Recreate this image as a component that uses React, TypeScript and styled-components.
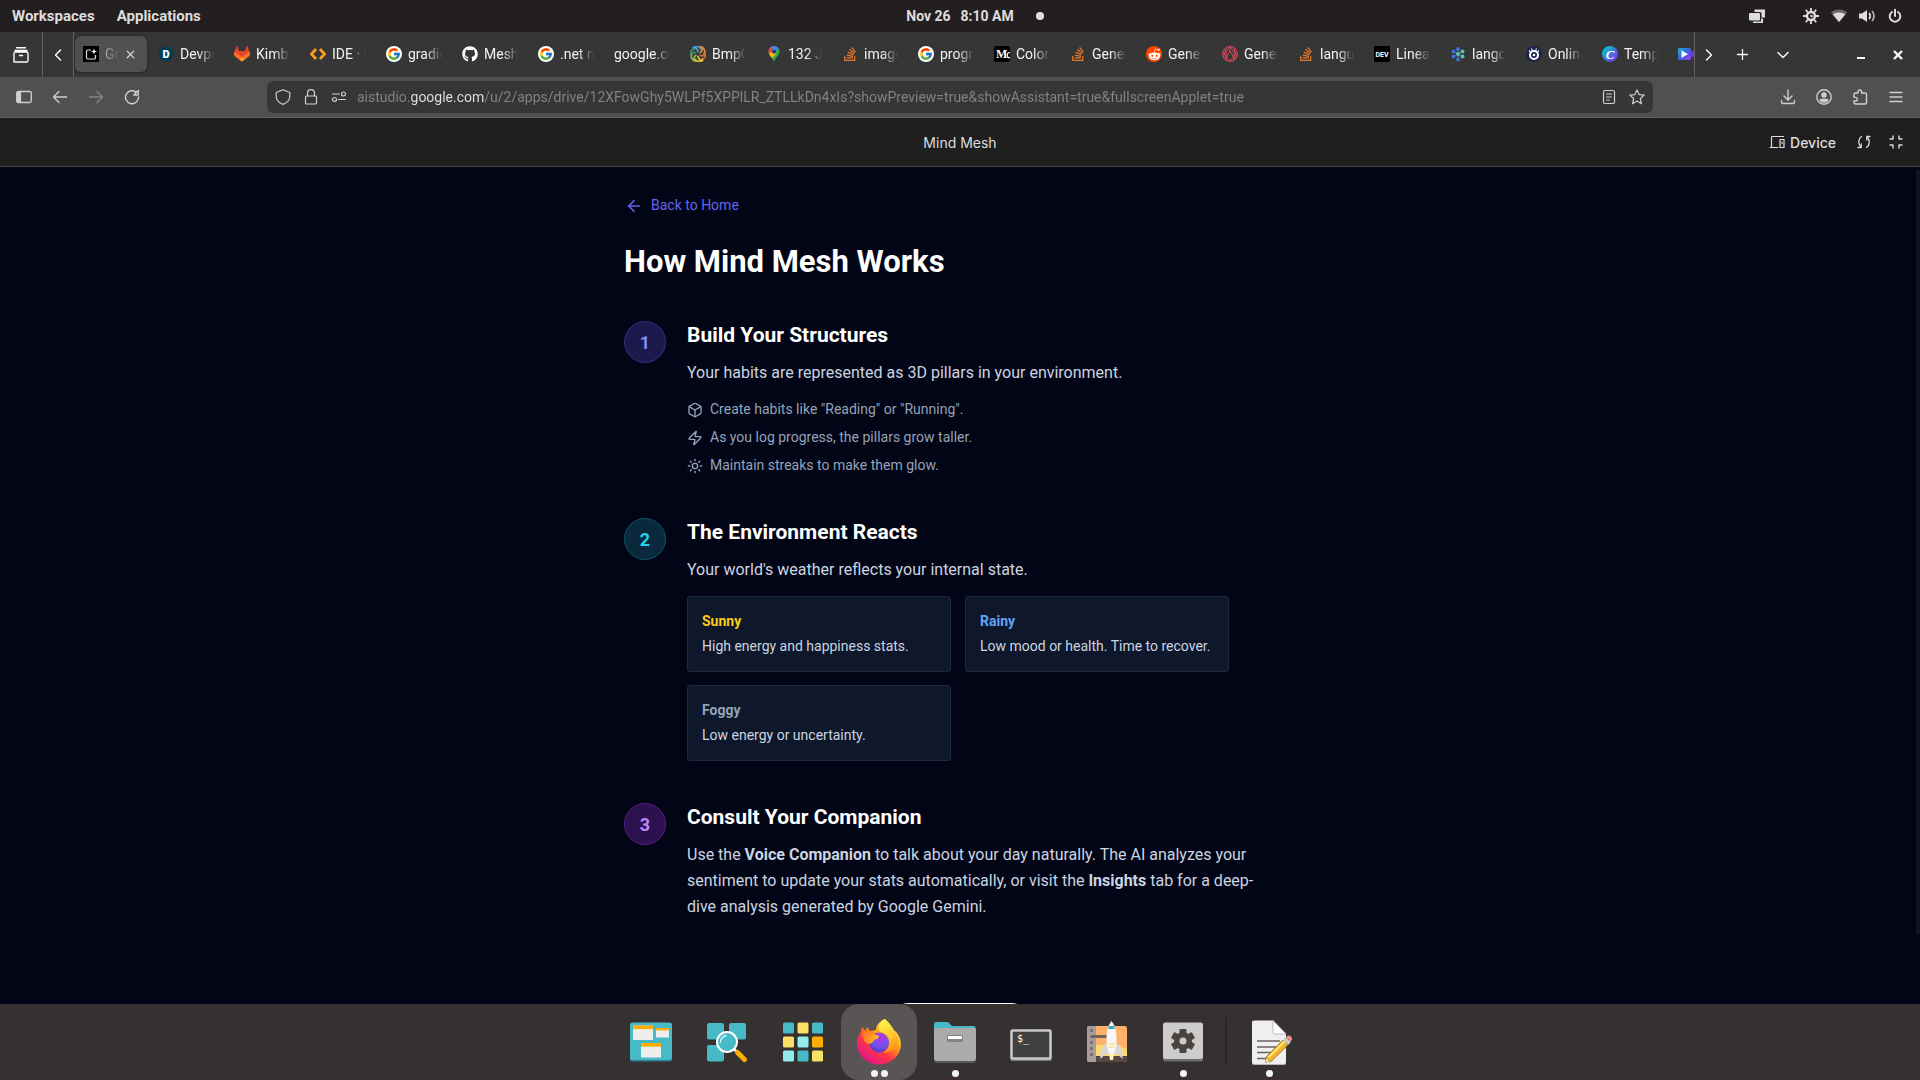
import React from 'react';
import styled, { createGlobalStyle } from 'styled-components';
import { ArrowLeft, Box, ChevronDown, ChevronLeft, ChevronRight, Plus, Sun, X, Zap } from 'lucide-react';
import { FcGoogle } from 'react-icons/fc';
import { FaGithub, FaStackOverflow, FaRedditAlien } from 'react-icons/fa';

const GlobalStyle = createGlobalStyle`
  *, *::before, *::after { box-sizing: border-box; }
  body {
    margin: 0;
    background: #020515;
    font-family: Roboto, "Liberation Sans", sans-serif;
  }
  button { font: inherit; color: inherit; background: none; border: 0; padding: 0; cursor: pointer; }
  svg { display: block; flex: none; }
  h1, h2, h3, p, ul, ol { margin: 0; padding: 0; }
  ul, ol { list-style: none; }
`;

const Screen = styled.div`
  display: flex;
  flex-direction: column;
  height: 100vh;
  overflow: hidden;
`;

/* ---------- desktop panel ---------- */

const Panel = styled.header`
  display: grid;
  grid-template-columns: 1fr auto 1fr;
  align-items: center;
  flex: none;
  height: 32px;
  padding: 0 17px 0 12px;
  background: #231f20;
  color: #dedddd;
  font-size: 15px;
  font-weight: 700;
`;

const PanelMenu = styled.nav`
  display: flex;
  gap: 22px;
`;

const Clock = styled.button`
  display: flex;
  gap: 10px;
  margin-left: 5px;
  font-size: 14px;
`;

const PanelEnd = styled.div`
  display: flex;
  align-items: center;
  gap: 12px;
`;

const NoticeDot = styled.span`
  width: 8px;
  height: 8px;
  margin: 0 auto 0 22px;
  border-radius: 50%;
  background: #dedddd;
`;

const TrayGap = styled.span`
  width: 14px;
`;

/* ---------- browser chrome ---------- */

const TabStrip = styled.div`
  display: flex;
  align-items: stretch;
  flex: none;
  height: 45px;
  background: #363636;
  color: #fbfbfe;
`;

const StripButton = styled.button<{ $w: number; $line?: 'left' | 'right' }>`
  display: flex;
  align-items: center;
  justify-content: center;
  flex: none;
  width: ${p => p.$w}px;
  ${p => p.$line && `border-${p.$line}: 1px solid #626262;`}
`;

const Tabs = styled.div`
  display: flex;
  flex: 1;
  min-width: 0;
  overflow: hidden;
  padding: 4px 0;
`;

const Tab = styled.div<{ $active?: boolean }>`
  display: flex;
  align-items: center;
  flex: none;
  width: ${p => (p.$active ? 72 : 76)}px;
  height: 36px;
  margin: 0 ${p => (p.$active ? 3 : 0)}px 0 ${p => (p.$active ? 1 : 0)}px;
  padding: 0 ${p => (p.$active ? 10 : 8)}px 0 8px;
  border-radius: 6px;
  font-size: 14px;
  background: ${p => (p.$active ? '#505050' : 'transparent')};
  box-shadow: ${p => (p.$active ? '0 0 3px rgba(0, 0, 0, 0.5)' : 'none')};
`;

const TabButton = styled.button<{ $dim?: boolean }>`
  display: flex;
  align-items: center;
  gap: 6px;
  flex: 1;
  min-width: 0;
  color: ${p => (p.$dim ? '#b4b4b6' : '#f2f2f4')};
`;

const TabTitle = styled.span`
  flex: 1;
  min-width: 0;
  overflow: hidden;
  white-space: nowrap;
  text-align: left;
  line-height: 20px;
  mask-image: linear-gradient(to left, transparent 4px, #000 20px);
`;

const StripEnd = styled.div`
  display: flex;
  width: 226px;
  flex: none;
`;

const WindowButtons = styled.div`
  display: flex;
  margin: 0 4px 0 auto;
`;

const NavBar = styled.div`
  display: flex;
  align-items: center;
  flex: none;
  height: 41px;
  padding: 0 6px;
  background: #505050;
  border-bottom: 1px solid #5f5f5f;
  color: #cfcfd2;
`;

const NavButton = styled.button<{ $dim?: boolean; $w?: number }>`
  display: flex;
  align-items: center;
  justify-content: center;
  flex: none;
  width: ${p => p.$w ?? 36}px;
  height: 32px;
  opacity: ${p => (p.$dim ? 0.4 : 1)};
`;

const AddressBar = styled.form`
  display: flex;
  align-items: center;
  flex: 1;
  min-width: 0;
  height: 32px;
  margin: 0 117px;
  padding: 0 2px;
  border-radius: 6px;
  background: #363636;
`;

const AddressInput = styled.input`
  flex: 1;
  min-width: 0;
  height: 24px;
  padding: 0 0 0 4px;
  border: 0;
  outline: 0;
  font: 14px Roboto, "Liberation Sans", sans-serif;
  color: transparent;
  background: linear-gradient(to right, #848486 58px, #e4e4e6 58px, #e4e4e6 131px, #848486 131px);
  background-clip: text;
  -webkit-background-clip: text;
`;

/* ---------- applet toolbar ---------- */

const AppBar = styled.div`
  display: grid;
  grid-template-columns: 1fr auto 1fr;
  align-items: center;
  flex: none;
  height: 49px;
  padding: 0 16px;
  background: #1f1f1f;
  border-bottom: 1px solid #444444;
  color: #dcdcdc;
  font-family: Inter, "Liberation Sans", sans-serif;
  font-size: 14px;
`;

const AppName = styled.span`
  grid-column: 2;
`;

const AppActions = styled.div`
  display: flex;
  align-items: center;
  justify-content: flex-end;
  gap: 16px;
`;

const IconLabel = styled.button`
  display: flex;
  align-items: center;
  gap: 5px;
  margin-right: 4px;
  font-weight: 500;
`;

/* ---------- page ---------- */

const Page = styled.main`
  position: relative;
  flex: 1;
  min-height: 0;
  overflow: hidden;
  background: #020515;
`;

const ScrollThumb = styled.span`
  position: absolute;
  top: 2px;
  right: 0;
  width: 4px;
  height: 766px;
  border-radius: 2px;
  background: #0d1322;
`;

const Content = styled.div`
  display: flex;
  flex-direction: column;
  max-width: 672px;
  margin: 0 auto;
  padding: 28px 0;
`;

const BackLink = styled.a`
  display: flex;
  align-items: center;
  align-self: flex-start;
  gap: 8px;
  padding-left: 1px;
  color: #6366f1;
  font-size: 14px;
  line-height: 21px;
  text-decoration: none;
`;

const Title = styled.h1`
  margin: 28px 0 42px;
  color: #ffffff;
  font-size: 31px;
  line-height: 35px;
`;

const Steps = styled.ol`
  display: flex;
  flex-direction: column;
  gap: 42px;
`;

const Step = styled.li`
  display: flex;
  align-items: flex-start;
  gap: 21px;
`;

const StepBody = styled.div`
  display: flex;
  flex-direction: column;
  min-width: 0;
`;

const tones = {
  indigo: { text: '#818cf8', fill: '#1c1a4c', line: '#312e81' },
  cyan: { text: '#22d3ee', fill: '#0a293d', line: '#0e5263' },
  purple: { text: '#c084fc', fill: '#2d114f', line: '#581c87' },
};

const StepNumber = styled.span<{ $tone: keyof typeof tones }>`
  display: flex;
  align-items: center;
  justify-content: center;
  flex: none;
  width: 42px;
  height: 42px;
  border: 1px solid ${p => tones[p.$tone].line};
  border-radius: 50%;
  background: ${p => tones[p.$tone].fill};
  color: ${p => tones[p.$tone].text};
  font-size: 18px;
  font-weight: 700;
`;

const StepTitle = styled.h2`
  color: #ffffff;
  font-size: 21px;
  line-height: 28px;
`;

const StepText = styled.p`
  max-width: 588px;
  margin-top: 11px;
  color: #cbd5e1;
  font-size: 16px;
  line-height: 26px;
`;

const Hints = styled.ul`
  display: flex;
  flex-direction: column;
  gap: 7px;
  margin-top: 13px;
`;

const Hint = styled.li`
  display: flex;
  align-items: center;
  gap: 7px;
  color: #94a3b8;
  font-size: 14px;
  line-height: 21px;
`;

const WeatherGrid = styled.div`
  display: grid;
  grid-template-columns: repeat(2, minmax(0, 264px));
  gap: 13px 14px;
  margin-top: 13px;
`;

const WeatherCard = styled.section`
  padding: 12px 14px;
  border: 1px solid #1e293b;
  border-radius: 3px;
  background: #0f172a;
  color: #cbd5e1;
  font-size: 14px;
  line-height: 25px;
`;

const WeatherName = styled.h3<{ $color: string }>`
  color: ${p => p.$color};
  font-size: 14px;
  line-height: 25px;
`;

const StartButton = styled.button`
  align-self: center;
  width: 144px;
  height: 42px;
  margin-top: 83px;
  border-radius: 21px;
  background: #ffffff;
`;

/* ---------- dock ---------- */

const Dock = styled.footer`
  display: flex;
  justify-content: center;
  flex: none;
  height: 76px;
  background: #353130;
  border-bottom: 1px solid #3d2c30;
`;

const DockItem = styled.button<{ $active?: boolean }>`
  display: flex;
  flex-direction: column;
  align-items: center;
  gap: 4px;
  width: 76px;
  height: 76px;
  padding-top: 14px;
  border-radius: 18px;
  background: ${p => (p.$active ? '#585554' : 'transparent')};
`;

const DockDots = styled.span`
  display: flex;
  gap: 3px;
`;

const DockDot = styled.span`
  width: 7px;
  height: 7px;
  border-radius: 50%;
  background: #f4f4f4;
`;

const DockLine = styled.span`
  width: 2px;
  height: 48px;
  margin: 14px 4px;
  background: #2a2625;
`;

/* ---------- favicons ---------- */

const Fav = ({ children, box = 16 }: { children: React.ReactNode; box?: number }) => (
  <svg width="16" height="16" viewBox={`0 0 ${box} ${box}`} aria-hidden="true">{children}</svg>
);

const RoundBack = styled.span<{ $color: string }>`
  display: flex;
  align-items: center;
  justify-content: center;
  flex: none;
  width: 16px;
  height: 16px;
  border-radius: 50%;
  background: ${p => p.$color};
`;

const Google = () => <RoundBack $color="#fff"><FcGoogle size={14} /></RoundBack>;
const Stack = () => <FaStackOverflow size={16} color="#e8762d" />;

const Studio = () => (
  <Fav>
    <rect width="16" height="16" fill="#000" />
    <path d="M8 4H5a1.5 1.5 0 0 0-1.5 1.5v6A1.5 1.5 0 0 0 5 13h6a1.5 1.5 0 0 0 1.500-1.500V9" fill="none" stroke="#ddd" strokeWidth="1.200" />
    <path d="M11 2.500l.8 2.200 2.200.8-2.200.8-.8 2.200-.8-2.200L8 5.500l2.200-.8z" fill="#fff" />
  </Fav>
);

const Devpost = () => (
  <Fav>
    <path d="M4 1h8l4 7-4 7H4L0 8z" fill="#003e54" />
    <text x="8" y="12" textAnchor="middle" fill="#fff" fontFamily="Roboto, sans-serif" fontSize="11" fontWeight="900">D</text>
  </Fav>
);

const Gitlab = () => (
  <Fav box={25}>
    <path fill="#E24329" d="M24.507 9.500l-.034-.09L21.082.562a.896.896 0 00-1.694.091l-2.290 7.010H7.825L5.535.653a.898.898 0 00-1.694-.09L.451 9.411.416 9.500a6.297 6.297 0 002.090 7.278l.012.010.030.022 5.160 3.867 2.560 1.935 1.554 1.176a1.051 1.051 0 001.268 0l1.555-1.176 2.560-1.935 5.197-3.890.014-.010A6.297 6.297 0 0024.507 9.500z" />
    <path fill="#FC6D26" d="M24.507 9.500l-.034-.09a11.440 11.440 0 00-4.560 2.051l-7.447 5.632 4.742 3.584 5.197-3.890.014-.010A6.297 6.297 0 0024.507 9.500z" />
    <path fill="#FCA326" d="M7.707 20.677l2.560 1.935 1.555 1.176a1.051 1.051 0 001.268 0l1.555-1.176 2.560-1.935-4.743-3.584-4.755 3.584z" />
    <path fill="#FC6D26" d="M5.010 11.461a11.430 11.430 0 00-4.560-2.050L.416 9.500a6.297 6.297 0 002.090 7.278l.012.010.030.022 5.160 3.867 4.745-3.584-7.444-5.632z" />
  </Fav>
);

const Ide = () => (
  <Fav>
    <path d="M6 3L1.500 8 6 13M10 3l4.500 5L10 13" fill="none" stroke="#f79a2b" strokeWidth="2.800" />
  </Fav>
);

/* six curved blades turning round the centre */
const Swirl = () => (
  <Fav>
    {['#4aa3d8', '#e88b3c', '#d8693a', '#e6c23f', '#8fbf45', '#3f8f6b'].map((c, i) => (
      <path key={c} d="M8 6.200C8 3 5.500 .8 2.800 2.200 4.500 0 9.500-.8 11 3.200" fill="none" stroke={c} strokeWidth="1.700" transform={`rotate(${i * 60} 8 8)`} />
    ))}
  </Fav>
);

const MapPin = () => (
  <Fav>
    <defs>
      <clipPath id="pin"><path d="M8 0a5.600 5.600 0 0 1 5.600 5.600C13.600 9.500 9.500 11 8 16 6.500 11 2.400 9.500 2.400 5.600A5.600 5.600 0 0 1 8 0z" /></clipPath>
    </defs>
    <g clipPath="url(#pin)">
      <rect width="16" height="16" fill="#34a853" />
      <path d="M0 0h16L8 6z" fill="#4285f4" />
      <path d="M0 0h4l4 6-6 3z" fill="#ea4335" />
      <path d="M2 9l6-6 2 5-5 5z" fill="#fbbc04" />
    </g>
    <circle cx="8" cy="5.600" r="2.100" fill="#1d3c78" />
  </Fav>
);

const Medium = () => (
  <Fav>
    <rect width="16" height="16" rx="2.500" fill="#000" />
    <text x="2" y="12" fill="#fff" fontFamily="Liberation Serif, serif" fontSize="12" fontWeight="700">M</text>
    <path d="M16 6.500c-2 0-2.800 1.200-2.800 2.800s.8 2.600 2.800 2.600" fill="none" stroke="#fff" strokeWidth="1.200" />
  </Fav>
);

const Reddit = () => <RoundBack $color="#ff4500"><FaRedditAlien size={13} color="#fff" /></RoundBack>;

const Geo = () => (
  <Fav>
    <g fill="none" stroke="#dd4a5c" strokeWidth="1">
      <circle cx="8" cy="8" r="7.400" />
      <path d="M8 .7C3.500 5 2.500 11 5 14.500M8 .7c4.500 4.300 5.500 10.300 3 13.800M8 1v4M8 5L4.500 11 8 15l3.500-4zM1 6l4 5M15 6l-4 5M4 2L1.500 11 5 14.500M12 2l2.500 9-3.500 3.500" />
    </g>
  </Fav>
);

const Dev = () => (
  <Fav>
    <rect width="16" height="16" rx="1" fill="#000" />
    <text x="8" y="11" textAnchor="middle" fill="#fff" fontFamily="Roboto, sans-serif" fontSize="7" fontWeight="700">DEV</text>
  </Fav>
);

const Chain = () => (
  <Fav>
    <g stroke="#3f7fd0" strokeWidth="1"><path d="M8 8V3M8 8v5M8 8L3.500 5.500M8 8l4.500-2.500M8 8l-4.500 2.500M8 8l4.500 2.500" /></g>
    <g fill="#3f6fd0"><circle cx="8" cy="3" r="2" /><circle cx="3.500" cy="5.500" r="2" /><circle cx="3.500" cy="10.500" r="2" /><circle cx="8" cy="13.500" r="2" /></g>
    <g fill="#5cc5a0"><circle cx="12.500" cy="5.500" r="2" /><circle cx="12.500" cy="10.500" r="2" /><circle cx="8" cy="8" r="2" /></g>
  </Fav>
);

const Eye = () => (
  <Fav>
    <circle cx="8" cy="8" r="8" fill="#1d2350" />
    <circle cx="8" cy="9" r="4" fill="none" stroke="#fff" strokeWidth="2" />
    <circle cx="8" cy="9" r="1.300" fill="#fff" />
    <path d="M3 4.500l1.500 1.500M5.500 2.500l.7 1.700M10.500 2.500l-.7 1.700M13 4.500L11.500 6" stroke="#fff" strokeWidth="1.100" />
  </Fav>
);

const Canva = () => (
  <Fav>
    <defs><linearGradient id="canva" x1="0" y1="0" x2="1" y2="1"><stop offset="0.100" stopColor="#00c9cf" /><stop offset="0.900" stopColor="#7d2ae8" /></linearGradient></defs>
    <circle cx="8" cy="8" r="8" fill="url(#canva)" />
    <text x="8" y="12.500" textAnchor="middle" fill="#fff" fontFamily="Liberation Serif, serif" fontSize="13" fontStyle="italic" fontWeight="700">C</text>
  </Fav>
);

const Clip = () => (
  <Fav>
    <defs><linearGradient id="clip" x1="0" y1="0" x2="1" y2="1"><stop offset="0" stopColor="#1fb6d6" /><stop offset="0.500" stopColor="#3a62e0" /><stop offset="1" stopColor="#9a3af0" /></linearGradient></defs>
    <rect y="2" width="13" height="12" rx="1.500" fill="url(#clip)" />
    <path d="M12 7l4-3v8l-4-3z" fill="#6c3ae6" />
    <path d="M3.500 4.500l6.500 3.500-6.500 4z" fill="#fff" />
  </Fav>
);

const tabs: { title: string; icon?: React.ReactNode }[] = [
  { title: 'Devpo', icon: <Devpost /> },
  { title: 'Kimbe', icon: <Gitlab /> },
  { title: 'IDE · I', icon: <Ide /> },
  { title: 'gradie', icon: <Google /> },
  { title: 'Mesh', icon: <FaGithub size={16} color="#fff" /> },
  { title: '.net m', icon: <Google /> },
  { title: 'google.co' },
  { title: 'BmpC', icon: <Swirl /> },
  { title: '132 Ja', icon: <MapPin /> },
  { title: 'image', icon: <Stack /> },
  { title: 'progr', icon: <Google /> },
  { title: 'Color', icon: <Medium /> },
  { title: 'Gener', icon: <Stack /> },
  { title: 'Gener', icon: <Reddit /> },
  { title: 'Gener', icon: <Geo /> },
  { title: 'langu', icon: <Stack /> },
  { title: 'Linea', icon: <Dev /> },
  { title: 'langc', icon: <Chain /> },
  { title: 'Onlin', icon: <Eye /> },
  { title: 'Temp', icon: <Canva /> },
  { title: '', icon: <Clip /> },
];

/* ---------- line icons ---------- */

const Line = ({ children, w = 1.2 }: { children: React.ReactNode; w?: number }) => (
  <svg width="16" height="16" viewBox="0 0 16 16" fill="none" stroke="currentColor" strokeWidth={w} strokeLinecap="round" strokeLinejoin="round" aria-hidden="true">{children}</svg>
);

/* ---------- dock icons ---------- */

const Art = ({ children }: { children: React.ReactNode }) => (
  <svg width="48" height="48" viewBox="0 0 48 48" aria-hidden="true">{children}</svg>
);

const WorkspacesArt = () => (
  <Art>
    <rect x="3" y="5" width="42" height="38.500" rx="2.500" fill="#2b8490" />
    <rect x="3" y="4.500" width="42" height="37.500" rx="2.500" fill="#48b9c7" />
    {[[6, 7.5, 20, 14.5], [29, 10, 13, 9.5], [14, 25, 20, 14.5]].map(([x, y, w, h]) => (
      <g key={x}>
        <rect x={x} y={y} width={w} height={h} fill="#eeeeee" />
        <rect x={x} y={y} width={w} height={h / 4} fill="#ffad00" />
      </g>
    ))}
  </Art>
);

const SearchArt = () => (
  <Art>
    {[[4, 5], [26, 5], [4, 27]].map(([x, y]) => (
      <rect key={`${x}-${y}`} x={x} y={y} width="17" height="16.500" rx="2" fill="#48b9c7" />
    ))}
    <path d="M31 31l3 3" stroke="#fff" strokeWidth="2.500" />
    <path d="M34.500 34.500l7 7" stroke="#ffad00" strokeWidth="5" strokeLinecap="round" />
    <circle cx="24" cy="24" r="10" fill="#48b9c7" stroke="#fff" strokeWidth="2" />
    <path d="M17.500 25a6.700 6.700 0 0 1 6-7.500" fill="none" stroke="#d8f4f7" strokeWidth="1.300" />
  </Art>
);

const GridArt = () => {
  const fills = ['#48b9c7', '#fae065', '#48b9c7', '#fae065', '#94ebeb', '#ffad00', '#94ebeb', '#48b9c7', '#fae065'];
  return (
    <Art>
      {fills.map((f, i) => (
        <rect key={i} x={4 + (i % 3) * 14.5} y={4.5 + Math.floor(i / 3) * 14} width="11" height="11" rx="1.500" fill={f} />
      ))}
    </Art>
  );
};

const FirefoxArt = () => (
  <Art>
    <defs>
      <linearGradient id="ffBody" x1="0.850" y1="0.100" x2="0.250" y2="0.950">
        <stop offset="0.050" stopColor="#fff44f" /><stop offset="0.400" stopColor="#ff980e" /><stop offset="0.650" stopColor="#ff3647" /><stop offset="1" stopColor="#e31587" />
      </linearGradient>
      <radialGradient id="ffGlobe" cx="0.600" cy="0.250" r="0.900">
        <stop offset="0" stopColor="#b833e1" /><stop offset="0.500" stopColor="#7153eb" /><stop offset="1" stopColor="#4a2fb0" />
      </radialGradient>
      <linearGradient id="ffFlame" x1="0.300" y1="0" x2="0.700" y2="1"><stop offset="0" stopColor="#fff44f" /><stop offset="0.550" stopColor="#ffc62e" /><stop offset="1" stopColor="#ff8a16" /></linearGradient>
      <linearGradient id="ffHead" x1="0" y1="0" x2="1" y2="0.300"><stop offset="0" stopColor="#ff6a1f" /><stop offset="1" stopColor="#ffb52c" /></linearGradient>
    </defs>
    <path d="M30 1c5 4 7 8 9.500 12 1 0 2 1.500 2 1.500 2.500 3 4.500 7 4.500 12A22 20.500 0 0 1 24 46.500 22 20.500 0 0 1 2 26c0-5 1.500-9 4-12l1-5 3.500 4L12 9l3 4 6-1c0-5 4-9 9-11z" fill="url(#ffBody)" />
    <circle cx="24" cy="24.500" r="10" fill="url(#ffGlobe)" />
    <path d="M30 1c-6 5-8 9-4.500 12.500C31 15 35 19 34.500 25c0 5-3 8-6 9.500 8 0 14-5 14.500-13-1-8-8-13-13-20.500z" fill="url(#ffFlame)" />
    <path d="M7 14l4-1 4 2.500 4.500.5 4.500 2c0 2-1.500 3-5 4-.5 2-2 3.500-5 4-4-1-7-5-7-12z" fill="url(#ffHead)" />
  </Art>
);

const FilesArt = () => (
  <Art>
    <path d="M3 6a2 2 0 0 1 2-2h11q1 0 2 1l3 3h21q3 0 3 4H3z" fill="#48b9c7" />
    <rect x="3" y="12" width="42" height="33" rx="3" fill="#585858" />
    <rect x="3" y="10" width="42" height="33" rx="3" fill="#ababab" />
    <rect x="16" y="17" width="16" height="7" rx="1" fill="#838383" />
    <rect x="17" y="18" width="14" height="3" fill="#fff" />
  </Art>
);

const TerminalArt = () => (
  <Art>
    <rect x="3.500" y="12" width="41" height="31" rx="1.500" fill="#7a7a7a" />
    <rect x="4.500" y="12.500" width="39" height="28" rx="1" fill="#404040" stroke="#c8c8c8" strokeWidth="2.500" />
    <text x="10" y="24" fill="#ffffff" fontFamily="DejaVu Sans Mono, monospace" fontSize="10">$_</text>
  </Art>
);

const RocketArt = () => (
  <Art>
    <rect x="4" y="8" width="40" height="36" rx="2" fill="#ffb06b" />
    <path d="M13 27h22c4 0 5 4 9 4v8H13z" fill="#fbd874" />
    <path d="M13 38h31v4a2 2 0 0 1-2 2H13z" fill="#574743" />
    <path d="M6 8h7v36H6a2 2 0 0 1-2-2V10a2 2 0 0 1 2-2z" fill="#a79c99" />
    <g fill="#6e6361"><circle cx="8.500" cy="12.500" r="1.500" /><circle cx="8.500" cy="18.500" r="1.500" /><circle cx="8.500" cy="24.500" r="1.500" /><circle cx="8.500" cy="30.500" r="1.500" /><circle cx="8.500" cy="36.500" r="1.500" /><rect x="8" y="17" width="17" height="3" rx="1" /></g>
    <path d="M24 24c-5 5-7 10-6.500 17l5-5h12l5 5c.5-7-1.500-12-6.500-17z" fill="#d6d6d6" />
    <path d="M28.500 3c4 5 5 11 5 18 0 5-1 10-2 14h-6c-1-4-2-9-2-14 0-7 1-13 5-18z" fill="#f7f7f7" />
    <path d="M26 8h5l1 3h-7z" fill="#3aa9b8" />
    <path d="M25 26h7M25.500 29h6" stroke="#fbd058" strokeWidth="1.200" />
    <path d="M26 35h5l-1 7h-3z" fill="#fff3c4" />
  </Art>
);

const SettingsArt = () => (
  <Art>
    <rect x="4" y="5" width="40" height="38.500" rx="2.500" fill="#6f6f6f" />
    <rect x="4" y="4.500" width="40" height="36.500" rx="2.500" fill="#cccccc" />
    <g fill="#4a4340">
      {[0, 60, 120].map(a => <rect key={a} x="20.500" y="11" width="7" height="24" rx="1" transform={`rotate(${a} 24 23)`} />)}
      <circle cx="24" cy="23" r="9" />
    </g>
    <circle cx="24" cy="23" r="3.500" fill="#cccccc" />
  </Art>
);

const EditorArt = () => (
  <Art>
    <path d="M9 3h19l13 13v29a2 2 0 0 1-2 2H9a2 2 0 0 1-2-2V5a2 2 0 0 1 2-2z" fill="#b5b5b5" />
    <path d="M9 2.500h19l13 13V44a2 2 0 0 1-2 2H9a2 2 0 0 1-2-2V4.500a2 2 0 0 1 2-2z" fill="#efefef" />
    <path d="M28 2.500l13 13.500H30a2 2 0 0 1-2-2z" fill="#ffffff" stroke="#b0b0b0" strokeWidth="0.800" />
    <path d="M12 23h23M12 29h20M12 34.500h14M12 40.500h10" stroke="#6b6361" strokeWidth="1.600" />
    <path d="M20.500 44.500l1-6L38 22l5 5-16.500 16z" fill="#f0b429" stroke="#7a5a12" strokeWidth="0.700" />
    <path d="M23.500 39.500L40 23" stroke="#ffe07a" strokeWidth="2" />
    <path d="M38 22l3-3 5 5-3 3z" fill="#c9c9c9" />
    <path d="M41 19l2-1.500q1.500-.5 3 1t1 3l-1.500 2z" fill="#f28b82" />
    <path d="M20.500 44.500l.7-4 3.300 3.300z" fill="#f6dfb0" />
  </Art>
);

const dock: { label: string; art: React.ReactNode; dots?: number; active?: boolean }[] = [
  { label: 'Workspaces', art: <WorkspacesArt /> },
  { label: 'Launcher', art: <SearchArt /> },
  { label: 'Applications', art: <GridArt /> },
  { label: 'Firefox', art: <FirefoxArt />, dots: 2, active: true },
  { label: 'Files', art: <FilesArt />, dots: 1 },
  { label: 'Terminal', art: <TerminalArt /> },
  { label: 'Shop', art: <RocketArt /> },
  { label: 'Settings', art: <SettingsArt />, dots: 1 },
];

const DockEntry = ({ label, art, dots = 0, active }: (typeof dock)[number]) => (
  <DockItem aria-label={label} $active={active}>
    {art}
    <DockDots>{Array.from({ length: dots }, (_, i) => <DockDot key={i} />)}</DockDots>
  </DockItem>
);

const weather = [
  { name: 'Sunny', color: '#facc15', text: 'High energy and happiness stats.' },
  { name: 'Rainy', color: '#60a5fa', text: 'Low mood or health. Time to recover.' },
  { name: 'Foggy', color: '#94a3b8', text: 'Low energy or uncertainty.' },
];

export default function App() {
  return (
    <Screen>
      <GlobalStyle />

      <Panel>
        <PanelMenu>
          <button>Workspaces</button>
          <button>Applications</button>
        </PanelMenu>
        <Clock><span>Nov 26</span><span>8:10 AM</span></Clock>
        <PanelEnd>
          <NoticeDot />
          <svg width="16" height="16" viewBox="0 0 16 16" fill="currentColor"><path d="M5.500 1.500H16v8h-3.500V5.500q0-1.500-1.500-1.500H5.500z" /><rect y="5" width="11" height="7.500" rx="1" /><path d="M4 13.500h8V10.500h2V15H4z" /></svg>
          <TrayGap />
          <svg width="16" height="16" viewBox="0 0 16 16" fill="none" stroke="currentColor"><circle cx="8" cy="8" r="4" strokeWidth="2.400" /><path d="M8 0v3M8 13v3M0 8h3M13 8h3M2.800 1.800l2 2.500M13.200 1.800l-2 2.500M2.800 14.200l2-2.500M13.200 14.200l-2-2.500" strokeWidth="1.800" /><path d="M7 6.500L11 8 8 9.500z" fill="currentColor" stroke="none" /></svg>
          <svg width="16" height="16" viewBox="0 0 16 16" fill="currentColor"><path d="M8 1.500c3 0 6 1.200 8 3.200L8 14 0 4.700C2 2.700 5 1.500 8 1.500z" opacity="0.400" /><path d="M8 4.500c2.300 0 4.500.8 6 2.200L8 14 2 6.700C3.500 5.300 5.700 4.500 8 4.500z" /></svg>
          <svg width="16" height="16" viewBox="0 0 16 16" fill="currentColor"><path d="M0 5.500h3L8 2v12L3 10.500H0z" /><path d="M10 5q2.500 3 0 6" fill="none" stroke="currentColor" strokeWidth="1.800" /><path d="M13 3q4 5 0 10" fill="none" stroke="currentColor" strokeWidth="1.600" opacity="0.800" /></svg>
          <svg width="16" height="16" viewBox="0 0 16 16" fill="none" stroke="currentColor" strokeWidth="2" strokeLinecap="round"><path d="M5 4a5.300 5.300 0 1 0 6 0M8 1.800V8" /></svg>
        </PanelEnd>
      </Panel>

      <TabStrip>
        <StripButton $w={43} $line="right" aria-label="Recent browsing">
          <Line w={1.4}><path d="M3.500 .8h9M2 3.500h12M1 15V6.500Q1 5 2.500 5h11Q15 5 15 6.500V13.500Q15 15 13.500 15h-11Q1 15 1 13.500M6.500 8.500h3" /></Line>
        </StripButton>
        <StripButton $w={31} $line="right" aria-label="Scroll tabs left"><ChevronLeft size={20} strokeWidth={1.7} /></StripButton>
        <Tabs role="tablist">
          <Tab $active>
            <TabButton $dim role="tab" aria-selected="true"><Studio /><TabTitle>Go</TabTitle></TabButton>
            <button aria-label="Close tab"><X size={13} strokeWidth={2.400} color="#d0d0d2" /></button>
          </Tab>
          {tabs.map((t, i) => (
            <Tab key={i}>
              <TabButton role="tab" aria-selected="false">{t.icon}<TabTitle>{t.title}</TabTitle></TabButton>
            </Tab>
          ))}
        </Tabs>
        <StripEnd>
          <StripButton $w={28} $line="left" aria-label="Scroll tabs right"><ChevronRight size={20} strokeWidth={1.7} /></StripButton>
          <StripButton $w={40} aria-label="New tab"><Plus size={17} strokeWidth={1.8} /></StripButton>
          <StripButton $w={42} aria-label="List all tabs"><ChevronDown size={20} strokeWidth={1.7} /></StripButton>
          <WindowButtons>
            <StripButton $w={38} aria-label="Minimize"><Line w={2}><path strokeLinecap="butt" d="M4 11h8" /></Line></StripButton>
            <StripButton $w={36} aria-label="Close window"><Line w={2.4}><path strokeLinecap="butt" d="M4 4l8 8M12 4l-8 8" /></Line></StripButton>
          </WindowButtons>
        </StripEnd>
      </TabStrip>

      <NavBar>
        <NavButton aria-label="Sidebar"><Line w={1.300}><rect x="0.700" y="2.500" width="14.600" height="11" rx="1.500" /><path d="M1.500 3h3v10h-3z" fill="currentColor" /></Line></NavButton>
        <NavButton aria-label="Back"><Line w={1.400}><path d="M1.500 8h13M7 2.500L1.500 8 7 13.500" /></Line></NavButton>
        <NavButton $dim aria-label="Forward"><Line w={1.400}><path d="M1.500 8h13M9 2.500L14.500 8 9 13.500" /></Line></NavButton>
        <NavButton aria-label="Reload"><Line w={1.400}><path d="M12.500 3.500A6.500 6.500 0 1 0 14.500 8M14.300 1.500v4.500H9.800z" /></Line></NavButton>
        <AddressBar onSubmit={e => e.preventDefault()}>
          <NavButton type="button" $w={28} aria-label="Tracking protection"><Line><path d="M8 .8l6.800 2.700V7c0 4-3 7-6.800 8.400C4.200 14 1.200 11 1.200 7V3.500z" /></Line></NavButton>
          <NavButton type="button" $w={28} aria-label="Connection secure"><Line><rect x="2.500" y="7" width="11" height="8" rx="1" /><path d="M4.500 7V4.200a3.500 3.500 0 0 1 7 0V7" /></Line></NavButton>
          <NavButton type="button" $w={28} aria-label="Permissions"><Line><circle cx="12.500" cy="5" r="2" /><circle cx="3.500" cy="10.500" r="2" /><path d="M1.500 5h7M7.500 10.500h7" /></Line></NavButton>
          <AddressInput
            aria-label="Address"
            spellCheck={false}
            defaultValue="aistudio.google.com/u/2/apps/drive/12XFowGhy5WLPf5XPPlLR_ZTLLkDn4xIs?showPreview=true&showAssistant=true&fullscreenApplet=true"
          />
          <NavButton type="button" $w={28} aria-label="Reader view"><Line><rect x="2.500" y="1.500" width="11" height="13" rx="1.500" /><path d="M5.500 5h5M5.500 8h5M5.500 11h3" /></Line></NavButton>
          <NavButton type="button" $w={28} aria-label="Bookmark"><Line><path d="M8 .9l2.100 4.700 5.100.5-3.900 3.400 1.200 5.300L8 12.100l-4.500 2.700 1.200-5.300L.8 6.100l5.100-.5z" /></Line></NavButton>
        </AddressBar>
        <NavButton aria-label="Downloads"><Line w={1.400}><path d="M8 1v9.500M4 7l4 4 4-4M1.500 11.500V13q0 1.500 1.500 1.500h10q1.500 0 1.500-1.500v-1.500" /></Line></NavButton>
        <NavButton aria-label="Account"><Line w={1.400}><circle cx="8" cy="8" r="7.200" /><circle cx="8" cy="6" r="2" fill="currentColor" /><path d="M4.500 10.500h7q0 2.500-3.500 2.500t-3.500-2.500z" fill="currentColor" /></Line></NavButton>
        <NavButton aria-label="Extensions"><Line w={1.400}><path d="M2 5.500Q2 4 3.500 4H6V2.800a1.800 1.800 0 0 1 3.600 0V4H13q1.500 0 1.500 1.500v8q0 1.500-1.500 1.500H3.500Q2 15 2 13.500V12h1.500a1.800 1.800 0 0 0 0-3.600H2z" /></Line></NavButton>
        <NavButton aria-label="Menu"><Line w={1.300}><path d="M2 3.500h12M2 8h12M2 12.500h12" /></Line></NavButton>
      </NavBar>

      <AppBar>
        <AppName>Mind Mesh</AppName>
        <AppActions>
          <IconLabel>
            <Line w={1.2}><path d="M1 13.500h8M2.500 13V3.500Q2.500 2.500 3.500 2.500h11M11 5.500h4v8h-4zM13 8v1.500" /></Line>
            Device
          </IconLabel>
          <button aria-label="Reload applet"><Line w={1.300}><path d="M5.500 2.500C2 4.500 2 10 4.500 12.500M2 13.500h3.200V10M10.500 13.500C14 11.500 14 6 11.500 3.500M14 2.500h-3.200V6" /></Line></button>
          <button aria-label="Exit full screen"><Line w={1.400}><path strokeLinecap="butt" d="M1.500 5H5V1.500M14.500 5H11V1.500M1.500 11H5v3.500M14.500 11H11v3.500" /></Line></button>
        </AppActions>
      </AppBar>

      <Page>
        <Content>
          <BackLink href="#home"><ArrowLeft size={18} strokeWidth={2.2} />Back to Home</BackLink>
          <Title>How Mind Mesh Works</Title>
          <Steps>
            <Step>
              <StepNumber $tone="indigo">1</StepNumber>
              <StepBody>
                <StepTitle>Build Your Structures</StepTitle>
                <StepText>Your habits are represented as 3D pillars in your environment.</StepText>
                <Hints>
                  <Hint><Box size={16} />Create habits like "Reading" or "Running".</Hint>
                  <Hint><Zap size={16} />As you log progress, the pillars grow taller.</Hint>
                  <Hint><Sun size={16} />Maintain streaks to make them glow.</Hint>
                </Hints>
              </StepBody>
            </Step>
            <Step>
              <StepNumber $tone="cyan">2</StepNumber>
              <StepBody>
                <StepTitle>The Environment Reacts</StepTitle>
                <StepText>Your world's weather reflects your internal state.</StepText>
                <WeatherGrid>
                  {weather.map(w => (
                    <WeatherCard key={w.name}>
                      <WeatherName $color={w.color}>{w.name}</WeatherName>
                      <p>{w.text}</p>
                    </WeatherCard>
                  ))}
                </WeatherGrid>
              </StepBody>
            </Step>
            <Step>
              <StepNumber $tone="purple">3</StepNumber>
              <StepBody>
                <StepTitle>Consult Your Companion</StepTitle>
                <StepText>
                  Use the <strong>Voice Companion</strong> to talk about your day naturally. The AI analyzes your sentiment to
                  update your stats automatically, or visit the <strong>Insights</strong> tab for a deep-dive analysis generated
                  by Google Gemini.
                </StepText>
              </StepBody>
            </Step>
          </Steps>
          <StartButton aria-label="Get started" />
        </Content>
        <ScrollThumb />
      </Page>

      <Dock>
        {dock.map(d => <DockEntry key={d.label} {...d} />)}
        <DockLine />
        <DockEntry label="Text Editor" art={<EditorArt />} dots={1} />
      </Dock>
    </Screen>
  );
}
